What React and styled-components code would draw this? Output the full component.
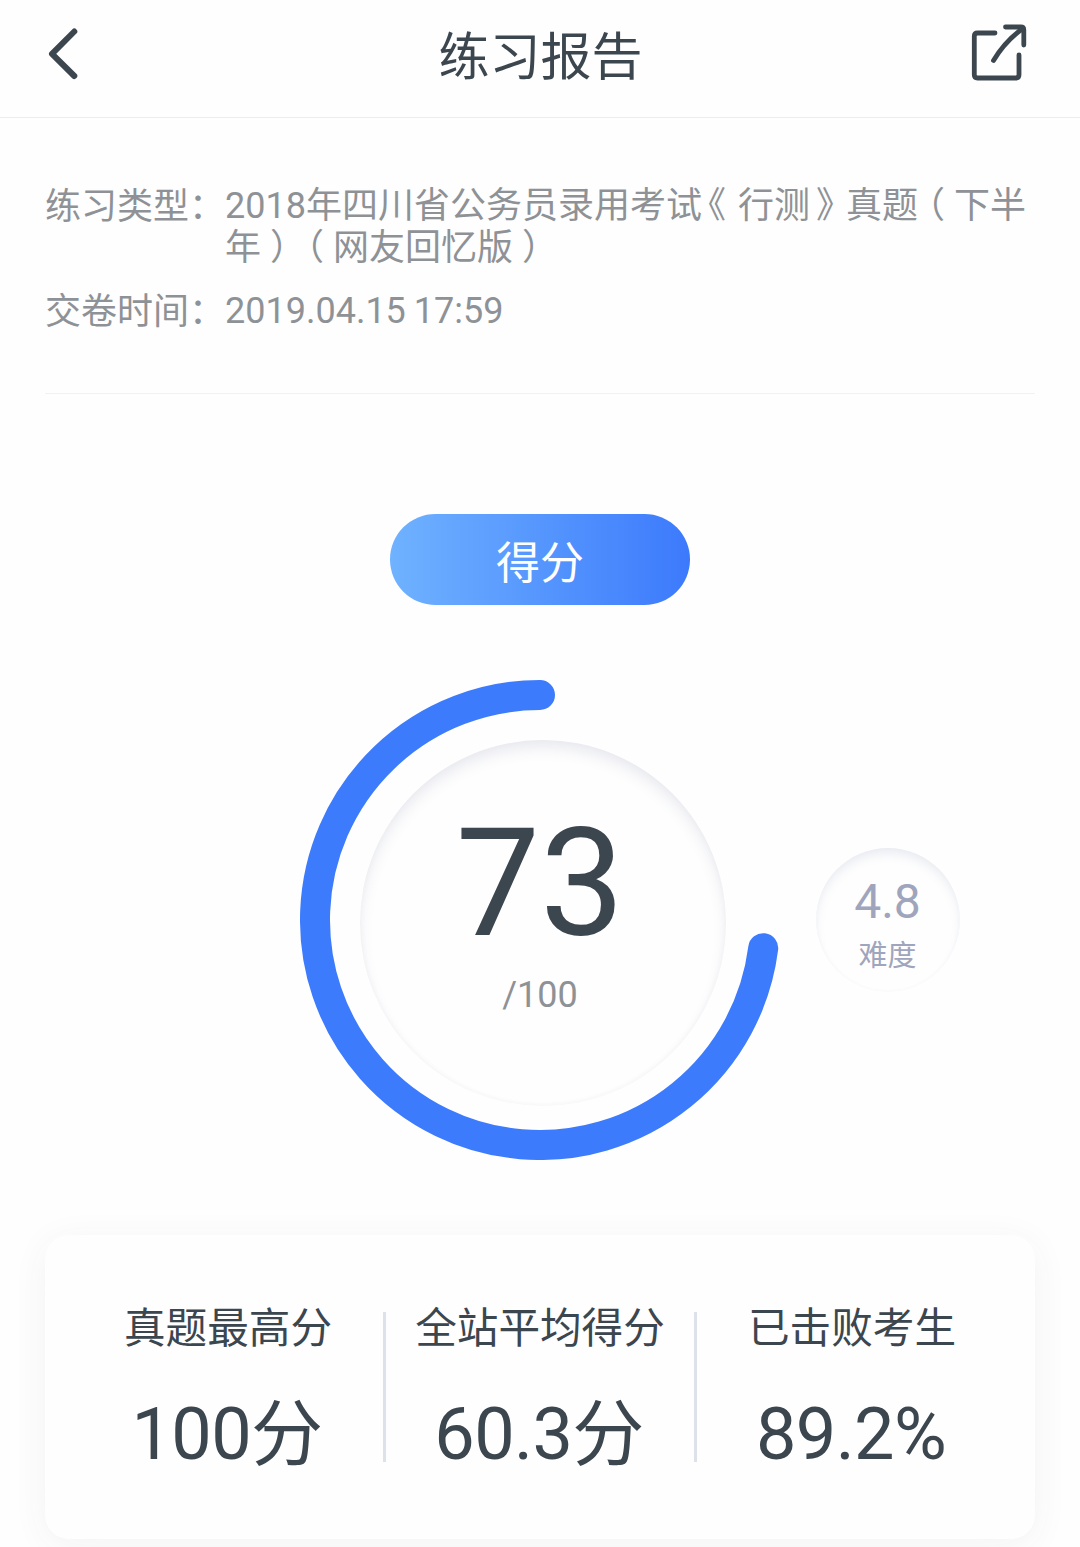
import React from 'react';
import styled, { createGlobalStyle } from 'styled-components';

const GlobalStyle = createGlobalStyle`
  * {
    box-sizing: border-box;
  }

  body {
    margin: 0;
    background: #fefefe;
    color: #3c464f;
    font-family: Roboto, 'Noto Sans CJK SC', sans-serif;
    text-spacing-trim: space-all;
  }
`;

const Page = styled.div`
  width: 1080px;
  height: 1547px;
  overflow: hidden;
  background: #fefefe;
`;

const Header = styled.header`
  display: flex;
  align-items: center;
  justify-content: space-between;
  height: 118px;
  padding: 0 45px 10px;
  border-bottom: 1px solid #ededee;
`;

const Title = styled.h1`
  margin: 0;
  padding: 8px 0 0 1px;
  font-size: 51px;
  font-weight: 400;
  line-height: 60px;
`;

const IconButton = styled.button`
  display: flex;
  justify-content: ${({ $end }) => ($end ? 'flex-end' : 'flex-start')};
  width: 66px;
  padding: 0;
  border: 0;
  background: none;
  color: inherit;
`;

const Info = styled.section`
  display: flex;
  flex-direction: column;
  gap: 21px;
  height: 276px;
  margin: 0 45px;
  padding-top: 67px;
  border-bottom: 1px solid #f1f1f2;
`;

const InfoRow = styled.div`
  display: flex;
  color: #8e9296;
  font-size: 36px;
  line-height: 42px;
`;

const InfoLabel = styled.span`
  flex: none;
  width: 180px;
  padding-top: 1px;
`;

const InfoValue = styled.span`
  flex: 1;
  word-spacing: -1px;
`;

// brackets sit in the middle of their full-width cell
const Bracket = styled.span`
  display: inline-block;
  width: 36px;
  padding-left: ${({ $title }) => ($title ? 6 : 9)}px;
  font-feature-settings: 'halt';
`;

const Score = styled.section`
  display: flex;
  flex-direction: column;
  align-items: center;
  padding-top: 120px;
`;

const Badge = styled.div`
  width: 300px;
  height: 91px;
  border-radius: 46px;
  background: linear-gradient(90deg, #6fb2ff, #3c7afc);
  color: #fff;
  font-size: 44px;
  line-height: 101px;
  text-align: center;
`;

const Charts = styled.div`
  display: grid;
  grid-template-columns: 480px 144px;
  column-gap: 36px;
  align-items: center;
  align-self: stretch;
  margin-top: 75px;
  padding-left: 300px;
`;

const Gauge = styled.div`
  display: grid;
  width: 480px;
  height: 480px;

  > * {
    grid-area: 1 / 1;
  }
`;

const Dial = styled.div`
  display: flex;
  flex-direction: column;
  align-items: center;
  width: 366px;
  height: 366px;
  margin: 60px 0 0 60px;
  padding-top: 56px;
  padding-right: 6px;
  border-radius: 50%;
  box-shadow: inset 0 9px 18px -4px #e4e5ec, inset 0 0 6px #f5f5f7;
`;

const Points = styled.span`
  font-size: 150px;
  line-height: 176px;
`;

const Total = styled.span`
  margin-top: 2px;
  color: #8e9296;
  font-size: 36px;
  line-height: 42px;
`;

const Difficulty = styled.div`
  display: flex;
  flex-direction: column;
  align-items: center;
  width: 144px;
  height: 144px;
  padding: 26px 1px 0 0;
  border-radius: 50%;
  box-shadow: inset 0 7px 14px -4px #e4e6ee, inset 0 0 5px #f9f9fb;
  color: #9fa5bd;
`;

const Level = styled.span`
  font-size: 48px;
  line-height: 56px;
`;

const LevelLabel = styled.span`
  margin-top: 8px;
  font-size: 29px;
  line-height: 36px;
`;

const Card = styled.section`
  display: flex;
  height: 304px;
  margin: 75px 45px 0;
  padding: 77px 28px;
  border-radius: 24px;
  background: #fefefe;
  box-shadow: 0 6px 36px rgba(60, 75, 75, 0.06);
`;

const Stat = styled.div`
  display: flex;
  flex: 1;
  flex-direction: column;
  align-items: center;

  &:nth-child(2) {
    flex: none;
    width: 314px;
    border: solid #dde2ea;
    border-width: 0 3px;
  }
`;

const StatLabel = styled.span`
  margin-top: -8px;
  font-size: 41.6px;
  line-height: 50px;
  white-space: nowrap;
`;

const StatValue = styled.span`
  margin-top: 39px;
  padding-right: 2px;
  font-size: 72px;
  letter-spacing: -0.6px;
  line-height: 84px;
`;

const stats = [
  { label: '真题最高分', value: '100分' },
  { label: '全站平均得分', value: '60.3分' },
  { label: '已击败考生', value: '89.2%' },
];

const RADIUS = 225;

// the ring starts at twelve o'clock and runs anticlockwise
const Ring = ({ percent }) => {
  const angle = (percent / 100) * 2 * Math.PI;
  const x = 240 - RADIUS * Math.sin(angle);
  const y = 240 - RADIUS * Math.cos(angle);

  return (
    <svg width="480" height="480" viewBox="0 0 480 480" fill="none">
      <path
        d={`M240 15A${RADIUS} ${RADIUS} 0 ${percent > 50 ? 1 : 0} 0 ${x} ${y}`}
        stroke="#3d7bfd"
        strokeWidth="30"
        strokeLinecap="round"
      />
    </svg>
  );
};

const BackIcon = () => (
  <svg width="36" height="56" viewBox="0 0 36 56" fill="none" stroke="currentColor" strokeWidth="6" strokeLinecap="round" strokeLinejoin="round">
    <path d="M29.3 5.5L7 27.8L29.3 50" />
  </svg>
);

const ShareIcon = () => (
  <svg width="66" height="64" viewBox="0 0 66 64" fill="none" stroke="currentColor" strokeWidth="4.8" strokeLinecap="round" strokeLinejoin="round">
    <path d="M26 11H8.5Q5.3 11 5.3 14.2V52.8Q5.3 56 8.5 56H46.8Q50 56 50 52.8V33" />
    <path d="M36.5 5H51.8Q54.8 5 54.8 8V23" />
    <path d="M24.5 38.5Q35.5 20 53 7" />
  </svg>
);

const App = () => {
  return (
    <>
      <GlobalStyle />
      <Page>
        <Header>
          <IconButton aria-label="返回"><BackIcon /></IconButton>
          <Title>练习报告</Title>
          <IconButton $end aria-label="分享"><ShareIcon /></IconButton>
        </Header>

        <Info>
          <InfoRow>
            <InfoLabel>练习类型：</InfoLabel>
            <InfoValue>
              2018年四川省公务员录用考试<Bracket $title>《</Bracket>行测<Bracket $title>》</Bracket>真题<Bracket>（</Bracket>下半年<Bracket>）</Bracket><Bracket>（</Bracket>网友回忆版<Bracket>）</Bracket>
            </InfoValue>
          </InfoRow>
          <InfoRow>
            <InfoLabel>交卷时间：</InfoLabel>
            <InfoValue>2019.04.15 17:59</InfoValue>
          </InfoRow>
        </Info>

        <Score>
          <Badge>得分</Badge>
          <Charts>
            <Gauge>
              <Ring percent={73} />
              <Dial>
                <Points>73</Points>
                <Total>/100</Total>
              </Dial>
            </Gauge>
            <Difficulty>
              <Level>4.8</Level>
              <LevelLabel>难度</LevelLabel>
            </Difficulty>
          </Charts>
        </Score>

        <Card>
          {stats.map(({ label, value }) => (
            <Stat key={label}>
              <StatLabel>{label}</StatLabel>
              <StatValue>{value}</StatValue>
            </Stat>
          ))}
        </Card>
      </Page>
    </>
  );
};

export default App;
